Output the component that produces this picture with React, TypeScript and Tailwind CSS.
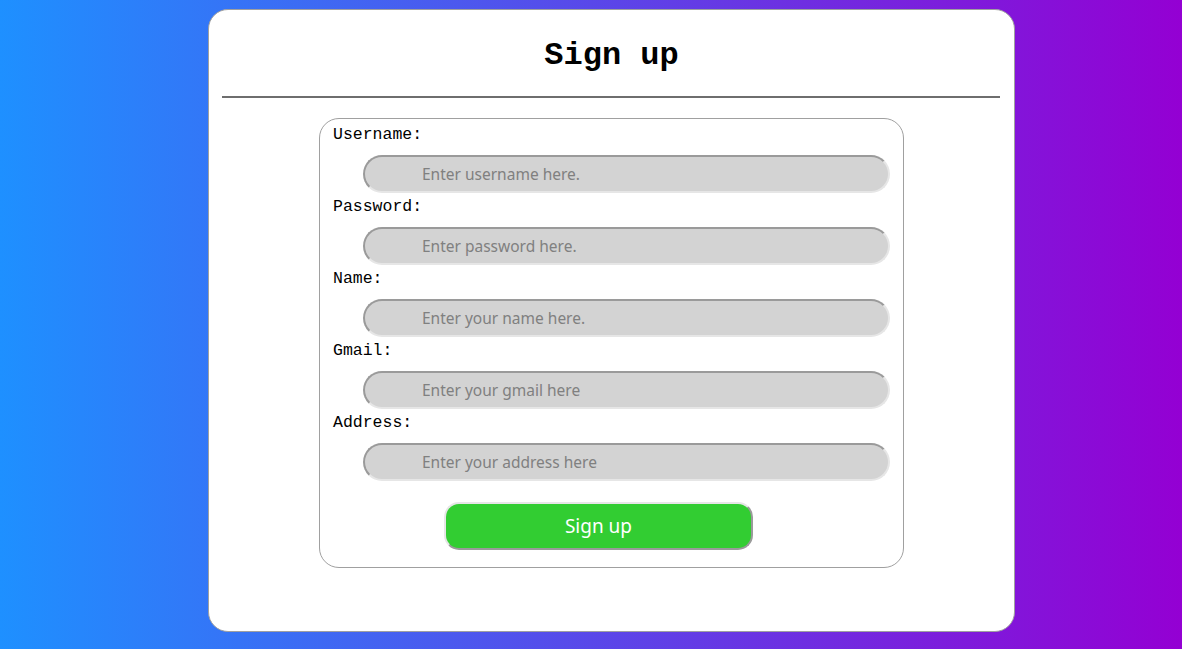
import React from "react";

const fields = [
  { label: "Username:", ph: "Enter username here." },
  { label: "Password:", ph: "Enter password here." },
  { label: "Name:", ph: "Enter your name here." },
  { label: "Gmail:", ph: "Enter your gmail here" },
  { label: "Address:", ph: "Enter your address here" },
];

export default function App() {
  return (
    <div className="min-h-screen w-full bg-[linear-gradient(to_right,#1e90ff,#9400d3)] pt-[9px] pb-[17px]">
      <div className="ml-[208px] w-[807px] h-[623px] bg-white border border-[#a0a0a0] rounded-[20px]">
        <h2
          className="mt-[27px] text-center text-[32px] leading-[38px] font-bold text-black"
          style={{ fontFamily: '"Liberation Mono", "Courier New", monospace' }}
        >
          Sign up
        </h2>
        <div className="mt-[21px] ml-[13px] mr-[14px] h-[2px] bg-[#6e6e6e]" />
        <div className="mt-[20px] mx-auto w-[585px] border border-[#a0a0a0] rounded-[20px] pt-[4px] pb-[17px] px-[13px]">
          {fields.map((f) => (
            <div key={f.label} className="mb-[2px]">
              <div
                className="h-[24px] flex items-center text-[16.5px] text-black"
                style={{ fontFamily: '"Liberation Mono", "Courier New", monospace' }}
              >
                {f.label}
              </div>
              <input
                placeholder={f.ph}
                className="mt-[8px] ml-[30px] w-[527px] h-[38px] rounded-full bg-[#d3d3d3] border-2 border-t-[#9a9a9a] border-l-[#9a9a9a] border-b-[#e6e6e6] border-r-[#e6e6e6] pl-[57px] text-[15.5px] text-[#555] placeholder:text-[#808080] outline-none"
                style={{ fontFamily: '"Noto Sans", "Open Sans", sans-serif' }}
              />
            </div>
          ))}
          <button
            className="mt-[19px] ml-[111px] w-[309px] h-[48px] rounded-[15px] bg-[#32cd32] border-2 border-t-[#e6e6e6] border-l-[#e6e6e6] border-b-[#9a9a9a] border-r-[#9a9a9a] text-white text-[19px]"
            style={{ fontFamily: '"Noto Sans", "Open Sans", sans-serif' }}
          >
            Sign up
          </button>
        </div>
      </div>
    </div>
  );
}
